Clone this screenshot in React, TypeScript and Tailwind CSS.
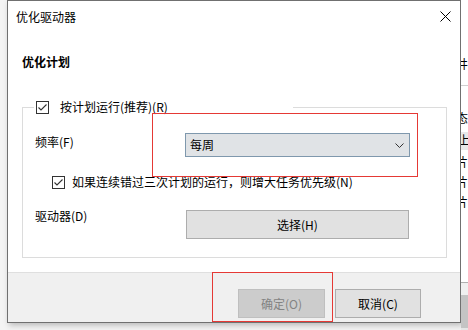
import React from "react";

const font = { fontFamily: '"Noto Sans CJK SC", "Noto Sans", sans-serif' };

function Check() {
  return (
    <span className="flex h-[13px] w-[13px] shrink-0 items-center justify-center border border-[#333333] bg-white">
      <svg width="11" height="11" viewBox="0 0 11 11">
        <path d="M1.5 5.5 L4 8 L9.5 2.5" fill="none" stroke="#333333" strokeWidth="1.1" />
      </svg>
    </span>
  );
}

export default function App() {
  return (
    <div
      className="relative flex h-[330px] w-[468px] overflow-hidden bg-[#f3f3f3] text-[12px] leading-[16px] text-black"
      style={font}
    >
      <div className="w-[7px] shrink-0 bg-[#f4f4f4]" />
      <div className="flex h-[323px] w-[454px] shrink-0 flex-col border border-[#707070] bg-white shadow-[2px_2px_6px_rgba(0,0,0,0.25)]">
        {/* title bar */}
        <div className="flex h-[30px] shrink-0 items-center justify-between pl-[8px] pr-[9px]">
          <span className="pt-[1px]">优化驱动器</span>
          <svg width="11" height="11" viewBox="0 0 11 11" className="mt-[1px]">
            <path d="M0.5 0.5 L10.5 10.5 M10.5 0.5 L0.5 10.5" stroke="#000" strokeWidth="1" />
          </svg>
        </div>
        {/* content */}
        <div className="flex flex-1 flex-col">
          <div className="ml-[14px] mt-[23px] font-bold">优化计划</div>
          <div className="ml-[14px] mt-[37px] flex w-[425px] flex-col border border-[#dcdcdc] pb-[18px]">
            <div className="-mt-[8px] ml-[11px] flex h-[14px] w-[259px] items-center bg-white pl-[2px]">
              <Check />
              <span className="ml-[11px]">按计划运行(推荐)(R)</span>
            </div>
            <div className="mt-[19px] flex h-[24px] items-center pl-[12px]">
              <span className="w-[150px] -mt-[6px]">频率(F)</span>
              <div className="flex h-[24px] w-[225px] items-center justify-between border border-[#7f98ad] bg-[#e0e3e6] pl-[4px] pr-[5px]">
                <span>每周</span>
                <svg width="9" height="6" viewBox="0 0 9 6" className="mt-[2px]">
                  <path d="M0.5 0.5 L4.5 4.5 L8.5 0.5" fill="none" stroke="#333" strokeWidth="1" />
                </svg>
              </div>
            </div>
            <div className="mt-[18px] flex h-[14px] items-center pl-[29px]">
              <Check />
              <span className="ml-[7px]">如果连续错过三次计划的运行，则增大任务优先级(N)</span>
            </div>
            <div className="mt-[21px] flex items-start pl-[12px]">
              <span className="w-[151px] pt-[-2px] -mt-[2px]">驱动器(D)</span>
              <div className="flex h-[29px] w-[223px] items-center justify-center border border-[#adadad] bg-[#e1e1e1]">
                选择(H)
              </div>
            </div>
          </div>
          {/* footer */}
          <div className="mt-auto flex h-[50px] items-start justify-end gap-[10px] border-t border-[#dfdfdf] bg-[#f0f0f0] pr-[39px] pt-[16px]">
            <div className="flex h-[29px] w-[87px] items-center justify-center border border-[#bfbfbf] bg-[#cccccc] text-[#838383]">
              确定(O)
            </div>
            <div className="flex h-[29px] w-[86px] items-center justify-center border border-[#adadad] bg-[#e1e1e1]">
              取消(C)
            </div>
          </div>
        </div>
      </div>
      {/* background window fragments */}
      <div className="flex h-[330px] flex-1 flex-col overflow-hidden bg-white">
        <div className="h-[56px]" />
        <div className="-ml-[5px] h-[16px] whitespace-nowrap">井</div>
        <div className="h-[13px]" />
        <div className="h-px bg-[#d0d0d0]" />
        <div className="h-[24px]" />
        <div className="-ml-[5px] h-[16px] whitespace-nowrap">态</div>
        <div className="h-[6px]" />
        <div className="-ml-[3px] h-[18px] whitespace-nowrap bg-[#e8e8e8]">上</div>
        <div className="h-[4px]" />
        <div className="-ml-[5px] h-[20px] whitespace-nowrap">片</div>
        <div className="-ml-[5px] h-[20px] whitespace-nowrap">片</div>
        <div className="-ml-[5px] h-[20px] whitespace-nowrap">片</div>
        <div className="h-[68px]" />
        <div className="h-px bg-[#b0b0b0]" />
        <div className="h-[12px] bg-[#f0f0f0]" />
        <div className="h-[33px] bg-[#c4c4c4]" />
        <div className="flex-1 bg-[#e6e6e6]" />
      </div>
      {/* red annotation rectangles */}
      <div className="pointer-events-none absolute left-[152px] top-[113px] h-[64px] w-[266px] border border-[#e53935]" />
      <div className="pointer-events-none absolute left-[212px] top-[272px] h-[50px] w-[121px] border border-[#e53935]" />
    </div>
  );
}
